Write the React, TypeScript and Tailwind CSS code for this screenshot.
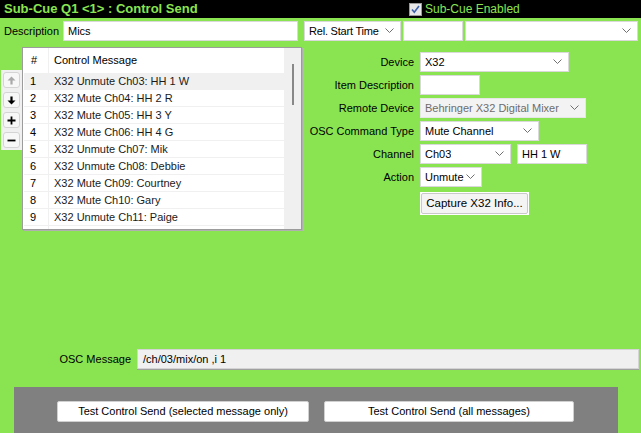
import React from "react";

const rows = [
  "X32 Unmute Ch03: HH 1 W",
  "X32 Mute Ch04: HH 2 R",
  "X32 Mute Ch05: HH 3 Y",
  "X32 Mute Ch06: HH 4 G",
  "X32 Unmute Ch07: Mik",
  "X32 Unmute Ch08: Debbie",
  "X32 Mute Ch09: Courtney",
  "X32 Mute Ch10: Gary",
  "X32 Unmute Ch11: Paige",
];

function Chevron() {
  return (
    <svg width="9" height="6" viewBox="0 0 9 6" className="shrink-0">
      <polyline points="0.5,0.5 4.5,4.5 8.5,0.5" fill="none" stroke="#707070" strokeWidth="1" />
    </svg>
  );
}

function Select({ value, className, disabled }: { value: string; className: string; disabled?: boolean }) {
  return (
    <div
      className={
        "flex h-[20px] items-center justify-between border pl-[4px] pr-[6px] " +
        (disabled ? "border-[#e6e6e6] bg-[#f3f3f3] text-[#6d6d6d] " : "border-[#d9d9d9] bg-white text-black ") +
        className
      }
    >
      <span className="truncate">{value}</span>
      <Chevron />
    </div>
  );
}

function Field({ value, className }: { value?: string; className: string }) {
  return (
    <div className={"flex h-[20px] items-center border border-[#d9d9d9] bg-white pl-[4px] " + className}>
      {value}
    </div>
  );
}

function SideButton({ children }: { children: React.ReactNode }) {
  return (
    <div className="flex h-[16px] w-[17px] items-center justify-center rounded-[3px] border border-[#d4d4d4] bg-[#f7f7f7]">
      {children}
    </div>
  );
}

export default function App() {
  return (
    <div
      className="flex h-[433px] w-[641px] flex-col overflow-hidden bg-[#8ae452] text-[11px] text-black"
      style={{ fontFamily: '"Liberation Sans", Arial, sans-serif' }}
    >
      {/* title bar */}
      <div className="flex h-[18px] shrink-0 items-center bg-black">
        <div className="w-[409px] pl-[4px] text-[13px] font-bold text-[#8ae452]">Sub-Cue Q1 &lt;1&gt; : Control Send</div>
        <div className="flex items-center gap-[3px] text-[12px] text-[#8ae452]">
          <svg width="13" height="13" viewBox="0 0 13 13">
            <rect x="0.5" y="0.5" width="12" height="12" fill="#e8e8e8" stroke="#9a9a9a" />
            <polyline points="3,6.5 5.3,9.3 10,3" fill="none" stroke="#3c62b0" strokeWidth="1.6" />
          </svg>
          <span>Sub-Cue Enabled</span>
        </div>
      </div>

      {/* description row */}
      <div className="mt-[3px] flex h-[20px] shrink-0 items-center">
        <span className="w-[63px] pl-[4px]">Description</span>
        <Field value="Mics" className="w-[235px]" />
        <Select value="Rel. Start Time" className="ml-[6px] w-[97px] tracking-[-0.2px]" />
        <Field className="ml-[2px] w-[60px]" />
        <Select value="" className="ml-[2px] w-[173px]" />
      </div>

      {/* main */}
      <div className="mt-[6px] flex h-[184px] shrink-0">
        <div className="ml-[1px] mt-[23px] flex h-[80px] w-[21px] flex-col items-center gap-[4px] bg-[#f0f0f0] pt-[2px]">
          <SideButton>
            <svg width="9" height="9" viewBox="0 0 9 9">
              <path d="M4.5 0.5 L8.5 4.5 L5.6 4.5 L5.6 8.5 L3.4 8.5 L3.4 4.5 L0.5 4.5 Z" fill="#a9a9a9" />
            </svg>
          </SideButton>
          <SideButton>
            <svg width="9" height="9" viewBox="0 0 9 9">
              <path d="M4.5 8.5 L8.5 4.5 L5.6 4.5 L5.6 0.5 L3.4 0.5 L3.4 4.5 L0.5 4.5 Z" fill="#000" />
            </svg>
          </SideButton>
          <SideButton>
            <svg width="9" height="9" viewBox="0 0 9 9">
              <path d="M3.6 0.5 H5.4 V3.6 H8.5 V5.4 H5.4 V8.5 H3.6 V5.4 H0.5 V3.6 H3.6 Z" fill="#000" />
            </svg>
          </SideButton>
          <SideButton>
            <svg width="9" height="9" viewBox="0 0 9 9">
              <rect x="0.5" y="3.6" width="8" height="1.8" fill="#000" />
            </svg>
          </SideButton>
        </div>

        {/* list */}
        <div className="flex h-[183px] w-[280px] border border-[#9c9c9c] bg-white shadow-[1px_1px_0_#b0b0b0]">
          <div className="flex flex-1 flex-col pl-[1px]">
            <div className="flex h-[25px] shrink-0">
              <div className="flex w-[25px] items-center border-r border-[#f0f0f0] pl-[7px]">#</div>
              <div className="flex items-center pl-[5px]">Control Message</div>
            </div>
            {rows.map((r, i) => (
              <div
                key={i}
                className={"flex h-[17px] shrink-0 border-b border-[#f0f0f0] " + (i === 0 ? "bg-[#f0f0f0]" : "")}
              >
                <div className="flex w-[25px] items-center border-r border-[#f0f0f0] pl-[6px]">{i + 1}</div>
                <div className="flex items-center pl-[5px] text-[#1a1a1a]">{r}</div>
              </div>
            ))}
            <div className="flex flex-1">
              <div className="w-[25px] border-r border-[#f0f0f0]" />
            </div>
          </div>
          <div className="flex w-[17px] justify-center bg-[#f0f0f0] pt-[16px]">
            <div className="h-[41px] w-[2px] bg-[#888888]" />
          </div>
        </div>

        {/* form */}
        <div className="mt-[5px] grid grid-cols-[112px_auto] content-start gap-x-[6px] gap-y-[3px]">
          <span className="flex h-[20px] items-center justify-end">Device</span>
          <Select value="X32" className="w-[149px]" />
          <span className="flex h-[20px] items-center justify-end">Item Description</span>
          <Field className="w-[60px]" />
          <span className="flex h-[20px] items-center justify-end">Remote Device</span>
          <Select value="Behringer X32 Digital Mixer" className="w-[166px]" disabled />
          <span className="flex h-[20px] items-center justify-end">OSC Command Type</span>
          <Select value="Mute Channel" className="w-[119px]" />
          <span className="flex h-[20px] items-center justify-end">Channel</span>
          <div className="flex gap-[6px]">
            <Select value="Ch03" className="w-[91px]" />
            <Field value="HH 1 W" className="w-[70px]" />
          </div>
          <span className="flex h-[20px] items-center justify-end">Action</span>
          <Select value="Unmute" className="w-[62px]" />
          <span />
          <div className="mt-[2px] w-[109px] bg-white p-[1px]">
            <div className="flex h-[21px] items-center justify-center rounded-[2px] border border-[#c9c9c9] bg-[#f4f4f4] text-[11.5px]">
              Capture X32 Info...
            </div>
          </div>
        </div>
      </div>

      {/* osc message */}
      <div className="mt-[118px] flex h-[20px] shrink-0 items-center">
        <span className="w-[137px] pr-[6px] text-right">OSC Message</span>
        <div className="flex h-[20px] w-[502px] items-center border border-[#d4d4d4] bg-[#f0f0f0] pl-[5px] shadow-[0_1px_0_#a0a0a0]">
          /ch/03/mix/on ,i 1
        </div>
      </div>

      {/* test buttons */}
      <div className="ml-[14px] mt-[18px] flex w-[604px] flex-1 items-start gap-[15px] bg-[#808080] pl-[43px] pt-[14px]">
        <div className="flex h-[21px] w-[252px] items-center justify-center rounded-[2px] border border-[#d0d0d0] bg-white">
          Test Control Send (selected message only)
        </div>
        <div className="flex h-[21px] w-[250px] items-center justify-center rounded-[2px] border border-[#d0d0d0] bg-white">
          Test Control Send (all messages)
        </div>
      </div>
    </div>
  );
}
